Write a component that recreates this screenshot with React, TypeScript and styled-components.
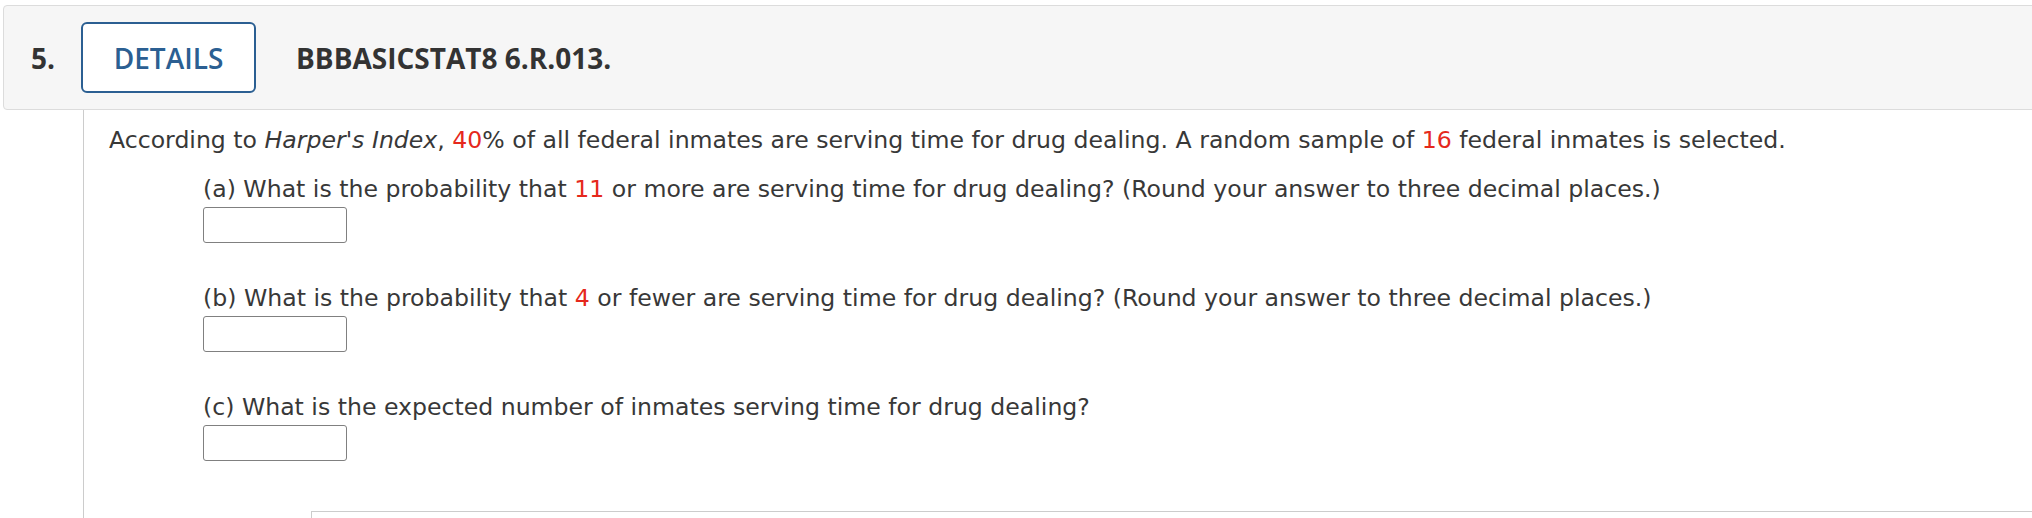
import styled, { createGlobalStyle } from 'styled-components'

const Global = createGlobalStyle`
  html, body {
    margin: 0;
    padding: 0;
    background: #ffffff;
    overflow: hidden;
  }
`

const Page = styled.div`
  width: 2032px;
  height: 518px;
  overflow: hidden;
  padding-top: 5px;
  box-sizing: border-box;
`

const Header = styled.header`
  display: flex;
  align-items: center;
  height: 105px;
  box-sizing: border-box;
  margin-left: 3px;
  margin-right: -20px;
  padding-left: 27px;
  background: #f6f6f6;
  border: 1px solid #dcdcdc;
  border-radius: 4px;
  font-family: 'Open Sans', 'Liberation Sans', sans-serif;
  color: #333333;
`

const Number = styled.span`
  font-size: 28px;
  font-weight: 700;
  margin-right: 26px;
`

const DetailsButton = styled.button`
  width: 175px;
  height: 71px;
  box-sizing: border-box;
  border: 2px solid #2b5f92;
  border-radius: 6px;
  background: #ffffff;
  color: #2b5f92;
  font-family: 'Open Sans', 'Liberation Sans', sans-serif;
  font-size: 28px;
  font-weight: 600;
  padding: 0;
  margin-right: 40px;
`

const Title = styled.span`
  font-size: 28px;
  font-weight: 700;
`

const Body = styled.section`
  margin-left: 83px;
  border-left: 1px solid #cccccc;
  height: 408px;
  padding-left: 25px;
  padding-top: 15px;
  box-sizing: border-box;
  font-family: 'DejaVu Sans', Verdana, sans-serif;
  font-size: 23.6px;
  line-height: 30px;
  color: #383838;
`

const Intro = styled.p`
  margin: 0 0 19px;
  white-space: nowrap;
`

const Part = styled.div<{ $last?: boolean }>`
  margin-left: 94px;
  margin-bottom: ${(p) => (p.$last ? '50px' : '40px')};
`

const Question = styled.p`
  margin: 0 0 3px;
  white-space: nowrap;
`

const Red = styled.span`
  color: #e5281c;
`

const Answer = styled.input`
  display: block;
  width: 144px;
  height: 36px;
  box-sizing: border-box;
  border: 1px solid #808080;
  border-radius: 3px;
  background: #ffffff;
  margin: 0;
`

const NextBox = styled.div`
  margin-left: 202px;
  margin-right: -40px;
  height: 40px;
  border-top: 1px solid #cccccc;
  border-left: 1px solid #cccccc;
`

export default function App() {
  return (
    <>
      <Global />
      <Page>
        <Header>
          <Number>5.</Number>
          <DetailsButton>DETAILS</DetailsButton>
          <Title>BBBASICSTAT8 6.R.013.</Title>
        </Header>
        <Body>
          <Intro>
            According to <i>Harper's Index</i>, <Red>40</Red>% of all federal inmates are serving
            time for drug dealing. A random sample of <Red>16</Red> federal inmates is selected.
          </Intro>
          <Part>
            <Question>
              (a) What is the probability that <Red>11</Red> or more are serving time for drug
              dealing? (Round your answer to three decimal places.)
            </Question>
            <Answer />
          </Part>
          <Part>
            <Question>
              (b) What is the probability that <Red>4</Red> or fewer are serving time for drug
              dealing? (Round your answer to three decimal places.)
            </Question>
            <Answer />
          </Part>
          <Part $last>
            <Question>(c) What is the expected number of inmates serving time for drug dealing?</Question>
            <Answer />
          </Part>
          <NextBox />
        </Body>
      </Page>
    </>
  )
}
